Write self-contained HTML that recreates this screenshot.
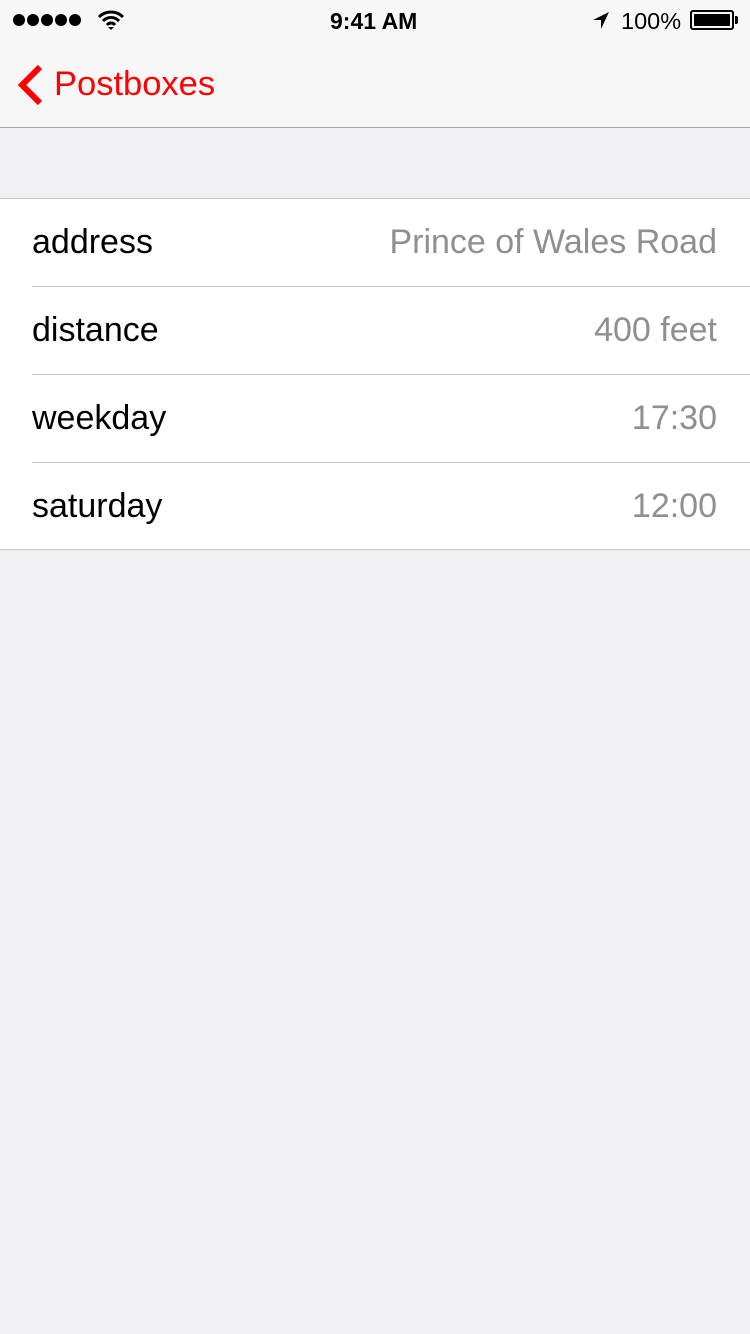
<!DOCTYPE html>
<html><head><meta charset="utf-8"><style>
*{margin:0;padding:0;box-sizing:border-box}
body{width:750px;height:1334px;background:#efeff4;font-family:"Liberation Sans",sans-serif;position:relative;overflow:hidden}
.nav{position:absolute;left:0;top:0;width:750px;height:128px;background:#f7f7f7;border-bottom:1px solid #a7a7aa}
.t{position:absolute;white-space:nowrap}
.tbl{position:absolute;left:0;top:198px;width:750px;height:352px;background:#fff;border-top:1px solid #c8c7cc;border-bottom:1px solid #c8c7cc}
.row{position:absolute;left:32px;right:0;height:88px;font-size:34px}
.row .l{position:absolute;left:0;top:24px;color:#000}
.row .r{position:absolute;right:33px;top:24px;color:#8e8e93}
.sep{position:absolute;left:32px;right:0;height:1px;background:#c8c7cc}
.dot{position:absolute;top:14px;width:12px;height:12px;border-radius:50%;background:#000}
</style></head><body>
<div class="nav">
<div class="dot" style="left:13px"></div><div class="dot" style="left:27px"></div><div class="dot" style="left:41px"></div><div class="dot" style="left:55px"></div><div class="dot" style="left:69px"></div>
<svg style="position:absolute;left:97px;top:10px" width="28" height="20" viewBox="0 0 28 20"><path d="M2 7a17 17 0 0 1 24 0M6 11a11 11 0 0 1 16 0M10 15a5 5 0 0 1 8 0" stroke="#000" stroke-width="3" fill="none"/><path d="M11 17l3 3 3-3z" fill="#000"/></svg>
<div class="t" style="left:330px;top:8px;font-size:23px;font-weight:bold">9:41 AM</div>
<svg style="position:absolute;left:592px;top:11px" width="18" height="19" viewBox="0 0 18 19"><path d="M17 1L1 9h8v9z" fill="#000"/></svg>
<div class="t" style="left:621px;top:8px;font-size:23.5px">100%</div>
<div style="position:absolute;left:690px;top:10px;width:44px;height:20px;border:2px solid #000;border-radius:3px;padding:2px"><div style="background:#000;width:100%;height:100%"></div></div>
<div style="position:absolute;left:735px;top:16px;width:3px;height:8px;background:#000;border-radius:0 2px 2px 0"></div>
<svg style="position:absolute;left:16px;top:64px" width="28" height="42" viewBox="0 0 28 42"><path d="M24 3L6 21l18 18" stroke="#ff0000" stroke-width="6" fill="none"/></svg>
<div class="t" style="left:54px;top:65px;font-size:34.5px;color:#ff0000">Postboxes</div>
</div>
<div class="tbl">
<div class="row" style="top:0"><span class="l t">address</span><span class="r t">Prince of Wales Road</span></div>
<div class="sep" style="top:87px"></div>
<div class="row" style="top:88px"><span class="l t">distance</span><span class="r t">400 feet</span></div>
<div class="sep" style="top:175px"></div>
<div class="row" style="top:176px"><span class="l t">weekday</span><span class="r t">17:30</span></div>
<div class="sep" style="top:263px"></div>
<div class="row" style="top:264px"><span class="l t">saturday</span><span class="r t">12:00</span></div>
</div>
</body></html>
